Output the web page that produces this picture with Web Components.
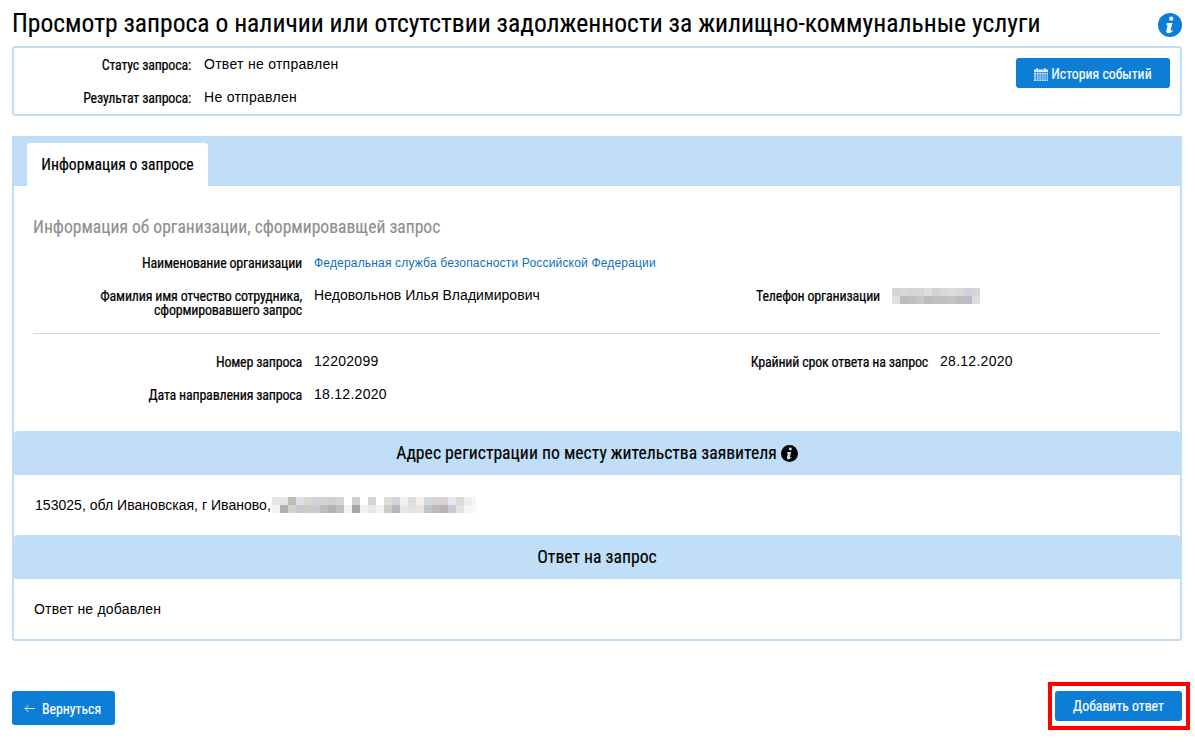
<!DOCTYPE html>
<html lang="ru">
<head>
<meta charset="utf-8">
<title>Просмотр запроса</title>
<style>
  html, body { margin: 0; background: #fff; }
  body { font-family: "Liberation Sans", Arial, sans-serif; color: #000; }
  :root { --narrow: "Roboto Condensed", "Liberation Sans Narrow", Roboto, sans-serif; --blue: #0d7ed6; --pale: #c0def7; }
</style>
</head>
<body>
<request-page></request-page>

<script>
// small helper so each element only has to give its markup
class Base extends HTMLElement {
  constructor(html) {
    super()
    this.attachShadow({mode: 'open'})
    this.shadowRoot.innerHTML = html
  }
}

class InfoIcon extends Base {
  constructor() {
    super(`<style>
      :host{display:inline-block;width:var(--s,24px);height:var(--s,24px);line-height:0}
      svg{width:100%;height:100%}
    </style>
    <svg viewBox="0 0 24 24"><circle cx="12" cy="12" r="12" fill="currentColor"/>
      <path fill="var(--mark,#fff)" d="M13.2 3.6a2.1 2.1 0 1 1 0 4.2 2.1 2.1 0 0 1 0-4.2zM8.9 10h5.600l-1.900 7.100c-.2.7.3.9 1.900-.2l.5.8c-1.600 1.700-3 2.500-4.600 2.500-1.700 0-2.500-1-2.100-2.500l1.200-4.600c.2-.8-.2-1-1-.9z"/></svg>`)
  }
}
customElements.define('info-icon', InfoIcon)

class BlueBtn extends Base {
  constructor() {
    super(`<style>
      :host{display:inline-flex;align-items:center;justify-content:var(--jc,center);gap:var(--gap,3px);box-sizing:border-box;
        height:var(--h,34px);width:var(--w,auto);padding:var(--pt,1px) 0 0 var(--pl,0);background:var(--blue);color:#fff;border-radius:3px;
        font:400 13.800px var(--narrow);-webkit-text-stroke:.15px}
    </style><slot name="icon"></slot><slot></slot>`)
  }
}
customElements.define('blue-btn', BlueBtn)

// blurred personal data in the screenshot: two rows of grey cells
class MaskedData extends Base {
  constructor() {
    super(`<style>
      :host{display:inline-grid;grid-auto-flow:column;grid-template-rows:8px 8px;grid-auto-columns:8px;vertical-align:middle;overflow:hidden}
      i{display:block}
    </style>`)
  }
  connectedCallback() {
    const cells = this.getAttribute('cells').split(' ')
    for (const c of cells) {
      const i = document.createElement('i')
      i.style.background = '#' + c
      this.shadowRoot.appendChild(i)
    }
  }
}
customElements.define('masked-data', MaskedData)

class FieldRow extends Base {
  constructor() {
    super(`<style>
      :host{display:flex;gap:var(--field-gap,12px);align-items:flex-start}
      .label{width:var(--label-w,288px);flex:none;text-align:right;font:400 14px/14px var(--narrow);letter-spacing:-.2px;-webkit-text-stroke:.2px;padding-top:2px}
      .value{font-size:14px;line-height:17px;letter-spacing:.28px}
    </style>
    <div class="label"><slot name="label"></slot></div>
    <div class="value"><slot></slot></div>`)
  }
}
customElements.define('field-row', FieldRow)

class SectionBand extends Base {
  constructor() {
    super(`<style>
      :host{display:flex;align-items:center;justify-content:center;gap:4px;height:44px;background:var(--pale);
        border-radius:4px 4px 0 0;font:400 17.700px var(--narrow);-webkit-text-stroke:.15px}
    </style><slot></slot>`)
  }
}
customElements.define('section-band', SectionBand)

class StatusCard extends Base {
  constructor() {
    super(`<style>
      :host{display:flex;justify-content:space-between;box-sizing:border-box;height:70px;border:2px solid var(--pale);border-radius:3px;--label-w:177px;--field-gap:13px}
      .rows{display:flex;flex-direction:column;gap:16px;padding-top:8px}
      .side{padding:10px 10px 0 0}
      .side blue-btn{--w:154px;--h:30px}
    </style>
    <div class="rows">
      <field-row><span slot="label">Статус запроса:</span>Ответ не отправлен</field-row>
      <field-row><span slot="label">Результат запроса:</span>Не отправлен</field-row>
    </div>
    <div class="side">
      <blue-btn>
        <svg slot="icon" width="14" height="14" viewBox="0 0 14 14"><path fill="#dcecfa" d="M0 2.500h2.500V1h1.500v1.500h6V1h1.500v1.500H14V5H0zM0 5.800h14V14H0z"/><path stroke="#0d7ed6" stroke-width=".7" d="M0 8h14M0 10h14M0 12h14M2.500 5.800V14M5 5.800V14M7.500 5.800V14M10 5.800V14M12.300 5.800V14"/></svg>
        История событий
      </blue-btn>
    </div>`)
  }
}
customElements.define('status-card', StatusCard)

class RequestPanel extends Base {
  constructor() {
    super(`<style>
      :host{display:block;box-sizing:border-box;height:505px;border:2px solid var(--pale);border-top:0;border-radius:3px;margin-top:20px}
      .tabs{height:50px;background:var(--pale);margin:0 -2px;padding:7px 0 0 15px;box-sizing:border-box}
      .tab{display:flex;align-items:center;justify-content:center;width:181px;height:43px;background:#fff;border-radius:3px 3px 0 0;font:400 15.700px var(--narrow);-webkit-text-stroke:.2px}
      h3{margin:0;font:400 17.600px/22px var(--narrow);color:#8f8f8f;padding:30px 0 0 19px;-webkit-text-stroke:.15px}
      .org{padding-top:16px}
      .two{display:flex}
      .two > :first-child{width:700px;flex:none}
      hr{border:0;border-top:1px solid #d9d9d9;margin:16px 20px 19px 19px}
      a{display:block;margin-top:1px;color:#0d6fbd;font-size:12px;text-decoration:none;letter-spacing:.18px}
      .name{letter-spacing:.05px}
      .pad{display:flex;flex-direction:column}
      .addr{height:60px;display:flex;align-items:center;padding-left:21px;font-size:14px;gap:1px;letter-spacing:.03px}
      .none{height:60px;display:flex;align-items:center;padding-left:20px;font-size:14px;letter-spacing:.2px}
      info-icon{--s:17px;--mark:#c0def7;color:#000}
      .wide{width:204px}
    </style>
    <div class="tabs"><div class="tab">Информация о запросе</div></div>
    <h3>Информация об организации, сформировавщей запрос</h3>
    <div class="org pad">
      <field-row><span slot="label">Наименование организации</span><a>Федеральная служба безопасности Российской Федерации</a></field-row>
      <div class="two" style="margin-top:15px">
        <field-row><span slot="label">Фамилия имя отчество сотрудника,<br>сформировавшего запрос</span><span class="name">Недовольнов Илья Владимирович</span></field-row>
        <field-row style="--label-w:165px;margin-left:1px"><span slot="label">Телефон организации</span><masked-data cells="d2d4d8 e1e1de d9d9da bcbcbc d0d5d9 c0c0bf d5d5d8 cbc5c3 dddddb b8bcc5 cfd1d3 c0c0c4 d9d8d9 c1c0be dedcd8 c2c2c8 d8d8d8 c0bcb9 d0d0d6 b9bcc6 d8d5d2 e0dcd9"></masked-data></field-row>
      </div>
    </div>
    <hr>
    <div class="pad">
      <div class="two">
        <field-row><span slot="label">Номер запроса</span>12202099</field-row>
        <field-row style="--label-w:214px"><span slot="label">Крайний срок ответа на запрос</span>28.12.2020</field-row>
      </div>
      <field-row style="margin-top:16px"><span slot="label">Дата направления запроса</span>18.12.2020</field-row>
    </div>
    <section-band style="margin-top:28px">Адрес регистрации по месту жительства заявителя <info-icon></info-icon></section-band>
    <div class="addr">153025, обл Ивановская, г Иваново,
      <masked-data class="wide" cells="e4e5e7 f4f4f4 e2e4e6 adb0b5 bfbbb5 d4d2cc dde0e0 c6c8cb d8d8d6 ccccc7 d2d2d6 c8cbd2 d3d3d5 bfbcbc d0d0d0 b5b2b2 d6d6d6 bdc1be ffffff f3f3f3 cfcfcf a9a5a1 ffffff eef2f5 d4d4d4 e8e8e8 ffffff f3f3f3 e1dcd8 cfcbc8 d5d5da b6b6bb f2eeec e8e8e8 dcdce0 e4e1e1 f1eeec e8e4e4 d6d9dc c0c5c9 d6d3d0 bcb9b6 dad4d0 b6b4b8 e4e8ec c8ccd4 dcdad6 e2e2e6 eeeeee f6f6f6 f4f4f4 fafafa"></masked-data>
    </div>
    <section-band>Ответ на запрос</section-band>
    <div class="none">Ответ не добавлен</div>`)
  }
}
customElements.define('request-panel', RequestPanel)

class RequestPage extends Base {
  constructor() {
    super(`<style>
      :host{display:block;padding:0 13px 0 12px;box-sizing:border-box;height:746px;overflow:hidden}
      header{display:flex;justify-content:space-between;align-items:center;height:46px}
      h1{margin:0;font:400 25.550px var(--narrow);-webkit-text-stroke:.15px}
      header info-icon{color:var(--blue);margin-top:4px}
      footer{display:flex;justify-content:space-between;align-items:flex-start;margin-top:50px;position:relative}
      .back{--w:103px;--gap:7px;--jc:flex-start;--pl:12px}
      .add{--w:127px;--h:30px;--pt:0px}
      .mark{position:absolute;right:-8px;top:-9px;width:142px;height:48px;box-sizing:border-box;border:4px solid #f00}
    </style>
    <header><h1>Просмотр запроса о наличии или отсутствии задолженности за жилищно-коммунальные услуги</h1><info-icon></info-icon></header>
    <status-card></status-card>
    <request-panel></request-panel>
    <footer>
      <blue-btn class="back"><svg slot="icon" width="11" height="9" viewBox="0 0 11 9"><path fill="none" stroke="#cfe5f8" stroke-width="1" d="M11 4.500H1M4.500 1 1 4.500 4.500 8"/></svg>Вернуться</blue-btn>
      <blue-btn class="add">Добавить ответ</blue-btn>
      <div class="mark"></div>
    </footer>`)
  }
}
customElements.define('request-page', RequestPage)
</script>
</body>
</html>
